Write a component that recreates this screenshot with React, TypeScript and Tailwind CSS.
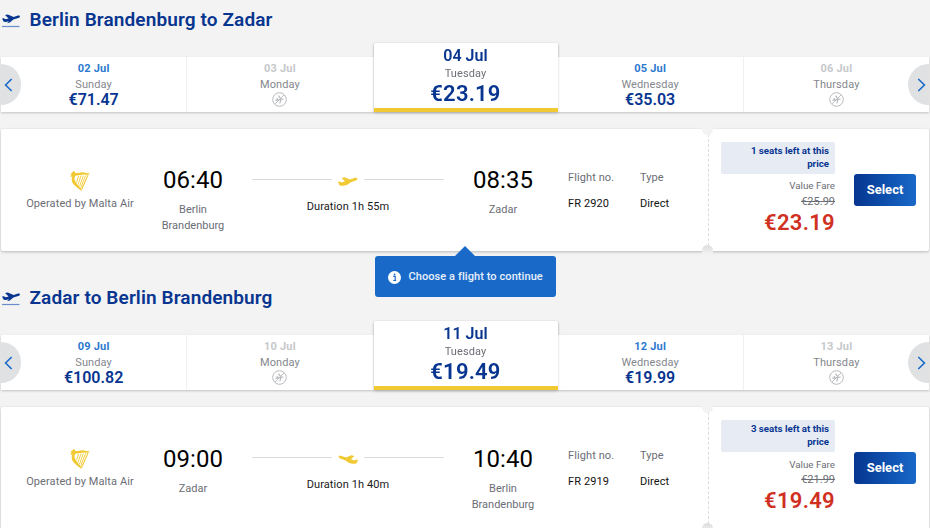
import React from "react";

type Day = { date: string; day: string; price?: string; active?: boolean };
type Flight = {
  title: string;
  days: Day[];
  depart: string;
  from: string;
  arrive: string;
  to: string;
  duration: string;
  number: string;
  seats: string;
  oldPrice: string;
  price: string;
  inbound?: boolean;
};

const flights: Flight[] = [
  {
    title: "Berlin Brandenburg to Zadar",
    days: [
      { date: "02 Jul", day: "Sunday", price: "€71.47" },
      { date: "03 Jul", day: "Monday" },
      { date: "04 Jul", day: "Tuesday", price: "€23.19", active: true },
      { date: "05 Jul", day: "Wednesday", price: "€35.03" },
      { date: "06 Jul", day: "Thursday" },
    ],
    depart: "06:40",
    from: "Berlin Brandenburg",
    arrive: "08:35",
    to: "Zadar",
    duration: "Duration 1h 55m",
    number: "FR 2920",
    seats: "1 seats left at this price",
    oldPrice: "€25.99",
    price: "€23.19",
  },
  {
    title: "Zadar to Berlin Brandenburg",
    days: [
      { date: "09 Jul", day: "Sunday", price: "€100.82" },
      { date: "10 Jul", day: "Monday" },
      { date: "11 Jul", day: "Tuesday", price: "€19.49", active: true },
      { date: "12 Jul", day: "Wednesday", price: "€19.99" },
      { date: "13 Jul", day: "Thursday" },
    ],
    depart: "09:00",
    from: "Zadar",
    arrive: "10:40",
    to: "Berlin Brandenburg",
    duration: "Duration 1h 40m",
    number: "FR 2919",
    seats: "3 seats left at this price",
    oldPrice: "€21.99",
    price: "€19.49",
    inbound: true,
  },
];

function PlaneIcon({ inbound }: { inbound?: boolean }) {
  return (
    <svg
      width="20"
      height="10"
      viewBox="0 0 20 10"
      className={inbound ? "mt-[5px] -scale-x-100" : "mt-[5px]"}
    >
      <path
        d="M0 5 1.6 4.6 3.6 5.4 7 4.3 3.6 1 6.6.3 12 2.5 15.6 1.2C17.4.6 19.4.7 19.4 1.7 19.3 2.8 18.2 3.3 17 3.7L13 5.2 8.8 8 5.6 8.7 3.4 8.8Q1.9 8.9 1.2 7.8Z"
        fill="#f1c933"
      />
    </svg>
  );
}

function TakeoffIcon() {
  return (
    <svg width="18" height="14" viewBox="0 0 18 14" className="shrink-0">
      <path
        d="M0 4.6 1.6 4.2 3.8 5.3 6.6 4.5 3 1.1 5.8.5 11.6 2.9 15.2 1.8C16.8 1.3 18 1.5 17.9 2.4 17.7 3.4 16.6 3.9 15.4 4.3L11.4 5.6 7.8 8.6 5 9.2 7 7.2 3.8 8Q2.2 8.3 1.4 7.3Z"
        fill="#073590"
      />
      <path d="M0 12.5H17.5" stroke="#6c8dcc" strokeWidth="1.2" />
    </svg>
  );
}

function NoFlightIcon() {
  return (
    <svg width="15" height="15" viewBox="0 0 15 15" fill="none" stroke="#b8babd">
      <circle cx="7.5" cy="7.5" r="6.8" strokeWidth="1" />
      <path d="M3 12 12 3" strokeWidth=".9" />
      <path d="M3.4 8.4 11.6 7M6.5 3.6 9 7.2 7.8 11.4M4.8 6.2 6 8" strokeWidth="1.2" />
    </svg>
  );
}

function HarpIcon() {
  return (
    <svg width="20" height="20" viewBox="0 0 20 20" fill="none" stroke="#f1c933">
      <path
        d="M3.2.3C4.6 0 5.4 1 5.2 2 8 2.4 11 .8 14 1.4 16 1.8 17.6 2.4 19.8 2 18.6 3.8 17 4 15 3.7 12 3.2 9 5 5.8 4.4 4.4 5.6 4 8 5.2 10.2L11.6 18.4 11.4 19.8C7.6 16.8 3.6 14.4 2.2 11.2 1.4 8.8 1.6 7 2.4 5.4L.2 6C.6 4.8 1.2 4 1.8 3.4L.2 3 2 1.8Z"
        fill="#f1c933"
        stroke="none"
      />
      <path d="M18.2 3.6 11.4 18.8" strokeWidth="1.1" />
      <path d="M8.6 5 6.6 11M11 4.6 8.2 13M13.4 4.5 9.6 15M15.6 4.5 10.8 16.6" strokeWidth=".9" />
    </svg>
  );
}

function Arrow({ right }: { right?: boolean }) {
  return (
    <button
      className={
        right
          ? "absolute top-[21px] right-0 flex h-[41px] w-[21px] items-center justify-end rounded-l-full bg-[#dfe1e3] pr-[3px]"
          : "absolute top-[21px] left-0 flex h-[41px] w-5 items-center rounded-r-full bg-[#dfe1e3] pl-[3px]"
      }
    >
      <svg width="9" height="14" viewBox="0 0 9 14" fill="none" stroke="#1969c9" strokeWidth="1.6">
        <path d={right ? "M1.3 1 7.4 7 1.3 13" : "M7.7 1 1.6 7 7.7 13"} />
      </svg>
    </button>
  );
}

function DayTile({ d }: { d: Day }) {
  if (d.active) {
    return (
      <div className="z-10 flex h-[69px] w-[184px] flex-col items-center rounded-t-[2px] border-b-4 border-[#f1c933] bg-white pt-[3px] text-center shadow-[0_1px_3px_rgba(0,0,0,0.18)]">
        <div className="text-[16px] leading-5 font-semibold text-[#073590]">{d.date}</div>
        <div className="pt-px text-[11px] leading-[14px] tracking-[0.1px] text-[#6b6e75]">{d.day}</div>
        <div className="text-[22px] leading-[25px] font-semibold tracking-[0.2px] text-[#073590]">{d.price}</div>
      </div>
    );
  }
  return (
    <div className="flex h-[55px] flex-1 flex-col items-center border-r border-[#f0f0f0] bg-white pt-1 text-center last:border-r-0">
      <div
        className={
          d.price
            ? "text-[11px] leading-4 font-bold tracking-[0.2px] text-[#2b78cf]"
            : "text-[11px] leading-4 font-bold tracking-[0.2px] text-[#c6c8cb]"
        }
      >
        {d.date}
      </div>
      <div className="text-[11px] leading-4 tracking-[0.1px] text-[#84878d]">{d.day}</div>
      {d.price ? (
        <div className="-mt-px text-[16px] leading-4 font-semibold text-[#073590]">{d.price}</div>
      ) : (
        <div className="-mt-px">
          <NoFlightIcon />
        </div>
      )}
    </div>
  );
}

function Stop({ time, city, inbound }: { time: string; city: string; inbound?: boolean }) {
  return (
    <div className={inbound ? "w-[68px] pt-9 text-center" : "w-[68px] pt-[35px] text-center"}>
      <div className="text-[24px] leading-8 text-black">{time}</div>
      <div className="mt-[6px] text-[11px] leading-4 text-[#6b6e75]">{city}</div>
    </div>
  );
}

function FlightSection({ f }: { f: Flight }) {
  return (
    <section className="h-[278px]">
      <header className="flex h-[43px] items-start pt-[7px] pl-[2px]">
        <div className="mt-[7px]">
          <TakeoffIcon />
        </div>
        <h2 className="ml-[9.5px] text-[19px] leading-[25px] font-semibold tracking-[0.12px] text-[#073590]">
          {f.title}
        </h2>
      </header>
      <div className="relative mr-[1px] ml-[1px] h-[69px]">
        <div className="flex items-end drop-shadow-[0_1px_1px_rgba(0,0,0,0.2)]">
          {f.days.map((d) => (
            <DayTile key={d.date} d={d} />
          ))}
        </div>
        <Arrow />
        <Arrow right />
      </div>
      <article className="relative mt-[17px] mr-[1px] ml-[1px] flex h-[122px] rounded-[2px] bg-white shadow-[0_1px_3px_rgba(0,0,0,0.25)]">
        <div className="flex w-[158px] flex-col items-center pt-[42px]">
          <HarpIcon />
          <div className="mt-[5px] text-[11px] leading-4 tracking-[0.1px] text-[#6b6e75]">Operated by Malta Air</div>
        </div>
        <Stop time={f.depart} city={f.from} inbound={f.inbound} />
        <div className="mx-[25px] w-[192px] pt-[45px] text-center">
          <div className="flex h-[10px] items-center justify-between">
            <span className="h-px w-20 bg-[#d9dbdd]" />
            <PlaneIcon inbound={f.inbound} />
            <span className="h-px w-20 bg-[#d9dbdd]" />
          </div>
          <div className="mt-[15px] text-[11px] leading-4 tracking-[0.1px] text-[#1a1a1a]">{f.duration}</div>
        </div>
        <Stop time={f.arrive} city={f.to} inbound={f.inbound} />
        <div className="ml-[31px] w-[72px] pt-[41px] text-[11px] leading-4 tracking-[0.1px]">
          <div className="text-[#6b6e75]">Flight no.</div>
          <div className="mt-[10px] text-[#111]">{f.number}</div>
        </div>
        <div className="w-[68px] pt-[41px] text-[11px] leading-4 tracking-[0.1px]">
          <div className="text-[#6b6e75]">Type</div>
          <div className="mt-[10px] text-[#111]">Direct</div>
        </div>
        <div className="w-[13px] border-l border-dashed border-[#d9dbdd]" />
        <div className="absolute -top-[5px] left-[701px] h-[11px] w-[11px] rounded-full bg-[#f3f3f3]" />
        <div className="absolute -bottom-[3px] left-[701px] h-[9px] w-[11px] rounded-t-full bg-linear-to-b from-[#dcdcdc] to-[#f3f3f3]" />
        <div className="flex w-[114px] flex-col pt-[13px] text-right">
          <div className="h-8 rounded-[2px] bg-[#e7ebf4] py-[2px] pr-[6px] pl-6 text-[9.7px] leading-[13px] font-bold text-[#073590]">
            {f.seats}
          </div>
          <div
            className={
              f.inbound
                ? "mt-1 h-[17px] pt-px text-[9.8px] leading-4 text-[#6b6e75]"
                : "mt-1 h-[17px] text-[9.8px] leading-4 text-[#6b6e75]"
            }
          >
            Value Fare
          </div>
          <div className="text-[11px] leading-[14px] text-[#6b6e75] line-through">{f.oldPrice}</div>
          <div className="text-[22px] leading-7 font-semibold tracking-[0.3px] text-[#d0301f]">{f.price}</div>
        </div>
        <button className="mt-[45px] ml-[19px] h-8 w-[62px] rounded-[3px] bg-linear-to-r from-[#073590] to-[#1969c9] text-[13px] font-bold text-white">
          Select
        </button>
      </article>
    </section>
  );
}

export default function App() {
  return (
    <main className="relative h-[528px] w-[930px] overflow-hidden bg-[#f3f3f3] font-[Roboto,sans-serif]">
      {flights.map((f) => (
        <FlightSection key={f.title} f={f} />
      ))}
      <div className="absolute top-[246px] left-[374.5px] z-20 flex w-[181px] flex-col items-center">
        <svg width="20" height="10" viewBox="0 0 20 10">
          <path d="M0 10 10 0 20 10Z" fill="#1969c9" />
        </svg>
        <div className="flex h-[41px] w-full items-center rounded-[3px] bg-[#1969c9] pt-[2px] pl-[13px] text-[11px] font-medium tracking-[0.08px] text-white/90">
          <svg width="13" height="13" viewBox="0 0 13 13">
            <circle cx="6.5" cy="6.5" r="6.5" fill="#fff" />
            <path d="M5.2 5.4H7.2V9.4M5.2 9.5H8.2" stroke="#1969c9" strokeWidth="1.2" fill="none" />
            <circle cx="6.6" cy="3.4" r=".9" fill="#1969c9" />
          </svg>
          <span className="ml-2">Choose a flight to continue</span>
        </div>
      </div>
    </main>
  );
}
